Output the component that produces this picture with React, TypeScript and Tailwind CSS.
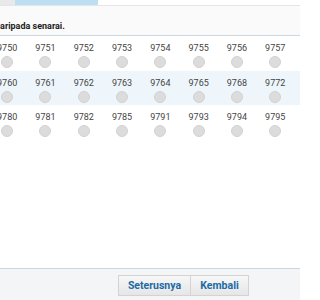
const rows = [
  ["9750", "9751", "9752", "9753", "9754", "9755", "9756", "9757"],
  ["9760", "9761", "9762", "9763", "9764", "9765", "9768", "9772"],
  ["9780", "9781", "9782", "9785", "9791", "9793", "9794", "9795"],
];

export default function App() {
  return (
    <div className="flex h-[300px] w-[300px] flex-col overflow-hidden bg-white font-['Roboto',sans-serif]">
      {/* tab strip */}
      <div className="flex h-[6px] border-b border-[#e6e6e6]">
        <div className="w-[15px] bg-[#e9e9e9]" />
        <div className="w-[83px] bg-[#bcdff4]" />
        <div className="flex-1 bg-white" />
      </div>

      <div className="flex h-[30px] items-end border-b border-[#c9d8e3] bg-[#fafafa] pb-[2px]">
        <p className="-ml-[5px] whitespace-nowrap text-[9px] font-bold text-[#222]">
          daripada senarai.
        </p>
      </div>

      <div className="-ml-[12px]">
        {rows.map((row, i) => (
          <div
            key={i}
            className={`grid h-[34.5px] grid-cols-[repeat(8,38.3px)] ${
              i === 1 ? "bg-[#eef6fb]" : "bg-white"
            }`}
          >
            {row.map((n) => (
              <div key={n} className="flex flex-col items-center pt-[6px]">
                <span className="text-[9px] leading-[12px] text-[#444]">{n}</span>
                <span className="mt-[2px] h-[12px] w-[12px] rounded-full border border-[#d2d2d2] bg-[#dcdcdc]" />
              </div>
            ))}
          </div>
        ))}
      </div>

      <div className="flex-1" />

      <div className="flex h-[32px] border-t border-[#c8d6e2] bg-[#f4f5f7] pl-[118px] pt-[6px]">
        <div className="flex h-[21px]">
          <button className="w-[73px] border border-[#d3d3d3] bg-gradient-to-b from-[#f7f7f7] to-[#e6e6e6] text-[10.5px] font-bold text-[#1b6aa6]">
            Seterusnya
          </button>
          <button className="-ml-px w-[59px] border border-[#d3d3d3] bg-gradient-to-b from-[#f7f7f7] to-[#e6e6e6] text-[10.5px] font-bold text-[#1b6aa6]">
            Kembali
          </button>
        </div>
      </div>
    </div>
  );
}
